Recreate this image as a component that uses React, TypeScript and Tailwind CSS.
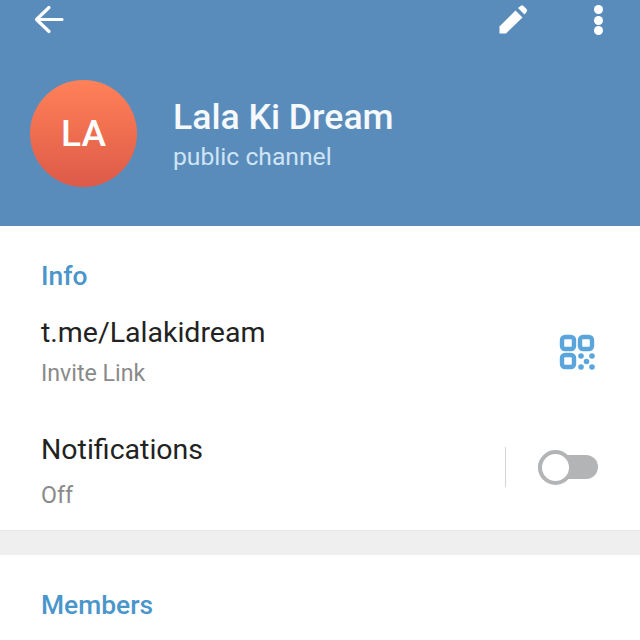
export default function App() {
  return (
    <div className="w-[640px] h-[640px] overflow-hidden bg-white flex flex-col font-['Roboto',sans-serif]">
      <header className="h-[226px] shrink-0 bg-[#5a8cbb] flex flex-col">
        <div className="h-[80px] shrink-0 pl-[34px] pr-[37px] pt-[4px] flex items-start justify-between">
          <svg width="30" height="30" viewBox="0 0 30 30" fill="none" stroke="#fff" strokeWidth="3.2" strokeLinecap="round" strokeLinejoin="round">
            <path d="M2.5 15.5 H28 M15 3.5 L2.5 15.5 L15 27.5" />
          </svg>
          <div className="flex items-start gap-[66px]">
            <svg width="30" height="30" viewBox="0 0 30 30" fill="#fff">
              <path d="M1.5 22.5 L17.5 6.5 L24.5 13.5 L8 29.5 L1.5 29.5 Z" />
              <path d="M20 4 L22.5 2 Q24 0.6 25.5 2 L28.5 5 Q30 6.5 28.5 8 L26.5 10.5 Z" />
            </svg>
            <div className="w-[9px] pt-[1px] flex flex-col gap-[1.7px]">
              <span className="block w-[9px] h-[9px] rounded-full bg-white" />
              <span className="block w-[9px] h-[9px] rounded-full bg-white" />
              <span className="block w-[9px] h-[9px] rounded-full bg-white" />
            </div>
          </div>
        </div>
        <div className="pl-[30px] flex items-start">
          <div className="w-[107px] h-[107px] rounded-full bg-gradient-to-b from-[#ff8158] to-[#dd5a48] flex items-center justify-center text-white text-[37px] leading-none font-medium">
            LA
          </div>
          <div className="ml-[36px] pt-[16px]">
            <div className="text-[35.6px] leading-[42px] font-medium text-[#f5f9fc]">Lala Ki Dream</div>
            <div className="mt-[1px] text-[24.7px] leading-[36px] text-[#cfe4f5]">public channel</div>
          </div>
        </div>
      </header>
      <section className="h-[304px] shrink-0 pl-[41px] pr-[42px] pt-[34px] flex flex-col">
        <div className="text-[26.4px] leading-[32px] font-medium text-[#4a96cb]">Info</div>
        <div className="mt-[23px] flex items-start justify-between">
          <div>
            <div className="text-[28.5px] leading-[36px] text-[#222222]">t.me/Lalakidream</div>
            <div className="mt-[7px] text-[23.2px] leading-[30px] text-[#8a8a8a]">Invite Link</div>
          </div>
          <svg width="36" height="36" viewBox="0 0 36 36" className="mt-[19px] mr-[3px]" fill="none" stroke="#5aa5dc" strokeWidth="4.4">
            <rect x="3" y="3" width="12" height="12" rx="3" />
            <rect x="21" y="3" width="12" height="12" rx="3" />
            <rect x="3" y="21" width="12" height="12" rx="3" />
            <g fill="#5aa5dc" stroke="none">
              <circle cx="22" cy="22" r="2.8" />
              <circle cx="33" cy="22" r="2.8" />
              <circle cx="27.5" cy="27.5" r="2.8" />
              <circle cx="22" cy="33" r="2.8" />
              <circle cx="33" cy="33" r="2.8" />
            </g>
          </svg>
        </div>
        <div className="mt-[44px] flex items-start justify-between">
          <div>
            <div className="text-[28.5px] leading-[36px] text-[#222222]">Notifications</div>
            <div className="mt-[12px] text-[23.2px] leading-[30px] text-[#8a8a8a]">Off</div>
          </div>
          <div className="flex items-center mt-[15px]">
            <div className="w-px h-[40px] bg-[#d4d4d4] mr-[32px]" />
            <div className="relative w-[60px] h-[24px] rounded-full bg-[#b2b4b6]">
              <div className="absolute left-0 top-[-5.5px] w-[35px] h-[35px] rounded-full bg-white border-[4px] border-[#b2b4b6]" />
            </div>
          </div>
        </div>
      </section>
      <div className="h-[25px] shrink-0 bg-[#efefef] border-t border-[#e6e6e6]" />
      <section className="pl-[41px] pt-[34px]">
        <div className="text-[26.4px] leading-[32px] font-medium text-[#4a96cb]">Members</div>
      </section>
    </div>
  );
}
